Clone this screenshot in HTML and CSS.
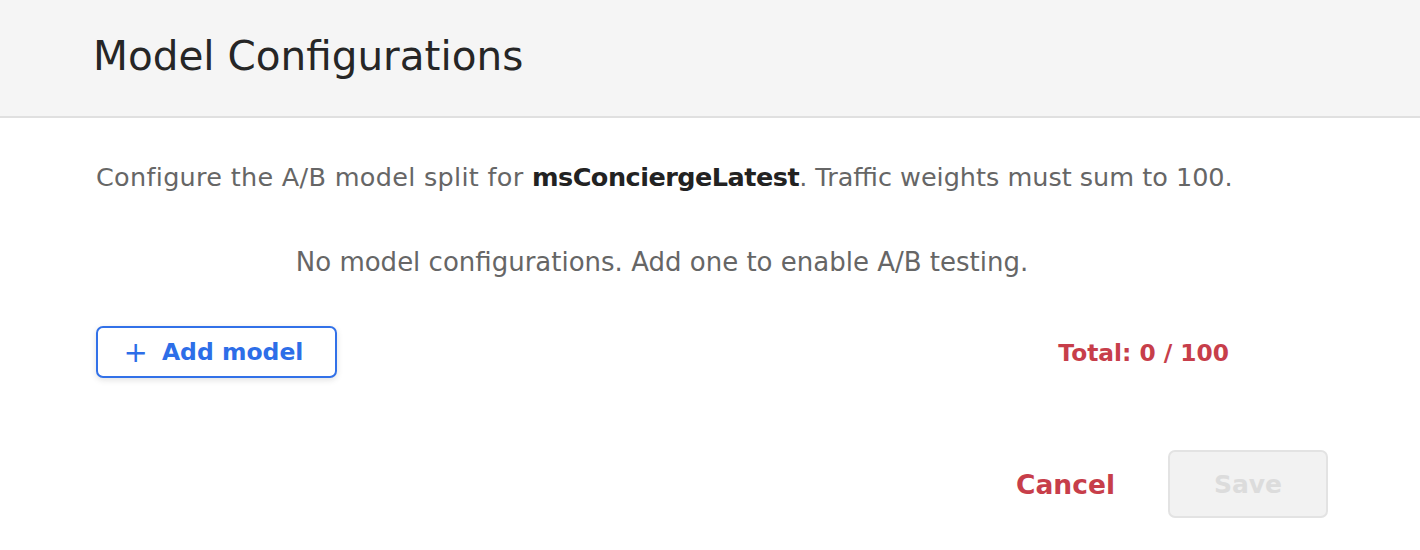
FILE: index.html
```html
<!DOCTYPE html>
<html>
<head>
<meta charset="utf-8">
<link rel="stylesheet" href="styles.css">
</head>
<body>
<div class="modal">
  <header class="modal-header">
    <h1 class="title">Model Configurations</h1>
  </header>
  <main class="modal-body">
    <p class="desc"><span class="lead">Configure the A/B model split for </span><strong>msConciergeLatest</strong>. Traffic weights must sum to 100.</p>
    <p class="empty">No model configurations. Add one to enable A/B testing.</p>
    <div class="actions-row">
      <button class="btn-add"><span class="plus">+</span>Add model</button>
      <span class="total">Total: 0 / 100</span>
    </div>
  </main>
  <footer class="modal-footer">
    <button class="btn-cancel">Cancel</button>
    <button class="btn-save" disabled>Save</button>
  </footer>
</div>
</body>
</html>
```
FILE: styles.css
```css
* { box-sizing: border-box; }
html, body { margin: 0; padding: 0; background: #fff; }
body { font-family: "DejaVu Sans", "Noto Sans", sans-serif; width: 1420px; height: 550px; overflow: hidden; }
.modal { display: flex; flex-direction: column; }
.modal-header {
  height: 118px;
  background: #f5f5f5;
  border-bottom: 2px solid #e0e0e0;
  display: flex;
  align-items: center;
  padding-left: 93px;
  padding-bottom: 4px;
}
.title { margin: 0; font-weight: 400; font-size: 40.5px; color: #262626; letter-spacing: 0; }
.modal-body { padding: 0 192px 0 96px; }
.desc { margin: 45px 0 0; font-size: 25.5px; color: #666; line-height: 28px; white-space: nowrap; }
.desc .lead { letter-spacing: 0.3px; }
.desc strong { color: #222; font-weight: 700; letter-spacing: -0.5px; }
.empty { margin: 57px 0 0; text-align: center; font-size: 26px; color: #666; line-height: 28px; white-space: nowrap; }
.actions-row { margin-top: 50px; display: flex; justify-content: space-between; align-items: center; }
.btn-add {
  width: 241px; height: 52px;
  border: 2px solid #3271e8; border-radius: 7px; background: #fff;
  box-shadow: 0 2px 6px rgba(0,0,0,0.12);
  color: #2d6ee8; font-family: inherit; font-weight: 700; font-size: 23.5px;
  display: flex; align-items: center; justify-content: center; gap: 14px; padding: 0 6px 0 0;
}
.plus { font-weight: 400; font-size: 29px; line-height: 1; }
.total { color: #c73e4a; font-weight: 700; font-size: 23.3px; margin-right: -1px; }
.modal-footer { margin-top: 72px; padding-right: 92px; display: flex; justify-content: flex-end; align-items: center; gap: 53px; }
.btn-cancel { background: none; border: none; padding: 0; color: #c73e4a; font-family: inherit; font-weight: 700; font-size: 26.5px; }
.btn-save {
  width: 160px; height: 68px; border: 2px solid #e3e3e3; border-radius: 7px; background: #f2f2f2;
  color: #dcdcdc; font-family: inherit; font-weight: 700; font-size: 25px;
}
```
